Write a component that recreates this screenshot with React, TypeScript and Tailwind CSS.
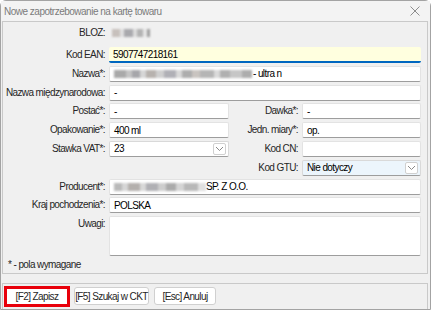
import React from "react";

const font = "font-['Liberation_Sans',Arial,sans-serif]";

// blurred placeholder for hidden values
function Blur({ blocks }: { blocks: [number, string][] }) {
  return (
    <span className="flex h-[9px] items-center blur-[0.8px]">
      {blocks.map(([w, c], i) => (
        <span key={i} className="h-[8px]" style={{ width: w, background: c }} />
      ))}
    </span>
  );
}

function Chevron() {
  return (
    <svg width="9" height="6" viewBox="0 0 9 6" fill="none">
      <path d="M1 1 L4.5 4.5 L8 1" stroke="#8a8a8a" strokeWidth="1" />
    </svg>
  );
}

function Label({ text, w = "w-[102px]" }: { text: string; w?: string }) {
  return (
    <div className={`${w} shrink-0 whitespace-nowrap text-right leading-[16px] text-[#262626]`}>{text}</div>
  );
}

function Input({ children, className = "" }: { children?: React.ReactNode; className?: string }) {
  return (
    <div
      className={`flex h-[16px] items-center whitespace-nowrap rounded-[2px] border border-[#e3e3e3] border-b-[#9d9d9d] bg-white pl-[4px] text-black ${className}`}
    >
      {children}
    </div>
  );
}

function Select({ value, className = "" }: { value: string; className?: string }) {
  return (
    <div
      className={`flex h-[16px] items-center rounded-[2px] border border-[#d9d9d9] border-b-[#9d9d9d] pl-[4px] pr-[2px] text-black ${className}`}
    >
      <span className="flex-1">{value}</span>
      <span className="flex h-[12px] w-[13px] items-center justify-center rounded-[2px] border border-[#d0d0d0] bg-white">
        <Chevron />
      </span>
    </div>
  );
}

export default function App() {
  return (
    <div className={`${font} h-[310px] w-[431px] overflow-hidden bg-white text-[10px] tracking-[-0.6px]`}>
      <div className="flex h-[310px] w-[431px] flex-col rounded-t-[6px] border border-[#a3a3a3] bg-[#f0f0f0]">
        {/* Title bar */}
        <div className="flex h-[20px] shrink-0 items-center justify-between bg-[#f3f3f3] pl-[3px] pr-[10px]">
          <span className="whitespace-nowrap text-[10px] tracking-[-0.5px] text-[#7b7b7b]">
            Nowe zapotrzebowanie na kartę towaru
          </span>
          <svg width="10" height="10" viewBox="0 0 10 10">
            <path d="M0.5 0.5 L9.5 9.5 M9.5 0.5 L0.5 9.5" stroke="#8c8c8c" strokeWidth="1" />
          </svg>
        </div>

        {/* Form panel */}
        <div className="ml-[1px] mr-[2px] flex h-[253px] shrink-0 flex-col border border-[#c9c9c9] pr-[6px] pt-[3px]">
          <div className="flex h-[16px] items-center gap-[4px]">
            <Label text="BLOZ:" />
            <div className="pl-[3px]">
              <Blur blocks={[[8, "#c7c0bc"], [4, "#e0e0e0"], [9, "#a9a9ad"], [4, "#dcdcdc"], [6, "#b3b3b3"], [4, "#e6e6e6"], [3, "#9e9e9e"]]} />
            </div>
          </div>

          <div className="mt-[6px] flex flex-col gap-[2.8px]">
            <div className="flex items-center gap-[4px]">
              <Label text="Kod EAN:" />
              <div className="flex h-[16px] flex-1 items-center rounded-[2px] border-b-[2px] border-[#0067c0] bg-[#ffffdf] pl-[4px] text-black">
                5907747218161
              </div>
            </div>

            <div className="flex items-center gap-[4px]">
              <Label text="Nazwa*:" />
              <Input className="flex-1">
                <Blur
                  blocks={[
                    [12, "#a9a9a9"], [6, "#c4c4c4"], [8, "#a6a6aa"], [6, "#d6d6d6"], [10, "#b7b2ae"],
                    [8, "#cfcfcf"], [12, "#b0b0b6"], [6, "#d9d9d9"], [10, "#adadad"], [8, "#c9c4c0"],
                    [14, "#b5b5b5"], [6, "#dadada"], [10, "#b0b0b0"], [12, "#c6c6c6"], [10, "#adadad"],
                  ]}
                />
                <span className="ml-[1px]">- ultra n</span>
              </Input>
            </div>

            <div className="flex items-center gap-[4px]">
              <Label text="Nazwa międzynarodowa:" />
              <Input className="flex-1">-</Input>
            </div>

            <div className="flex items-center gap-[4px]">
              <Label text="Postać*:" />
              <Input className="w-[120px]">-</Input>
              <Label text="Dawka*:" w="w-[65px]" />
              <Input className="flex-1">-</Input>
            </div>

            <div className="flex items-center gap-[4px]">
              <Label text="Opakowanie*:" />
              <Input className="w-[120px]">400 ml</Input>
              <Label text="Jedn. miary*:" w="w-[65px]" />
              <Input className="flex-1">op.</Input>
            </div>

            <div className="flex items-center gap-[4px]">
              <Label text="Stawka VAT*:" />
              <Select value="23" className="w-[120px] bg-white" />
              <Label text="Kod CN:" w="w-[65px]" />
              <Input className="flex-1" />
            </div>

            <div className="flex items-center gap-[4px]">
              <div className="w-[226px] shrink-0" />
              <Label text="Kod GTU:" w="w-[65px]" />
              <Select value="Nie dotyczy" className="flex-1 bg-[#ecf5fc]" />
            </div>

            <div className="flex items-center gap-[4px]">
              <Label text="Producent*:" />
              <Input className="flex-1">
                <Blur
                  blocks={[
                    [8, "#b9b9b9"], [6, "#d6d6d6"], [12, "#b4b0ad"], [6, "#d8d8d8"], [12, "#b0b0b4"],
                    [8, "#cdcdcd"], [10, "#aaaaaa"], [8, "#d4d4d4"], [14, "#b8b8b8"], [8, "#e0e0e0"],
                  ]}
                />
                <span>SP. Z O.O.</span>
              </Input>
            </div>

            <div className="flex items-center gap-[4px]">
              <Label text="Kraj pochodzenia*:" />
              <Input className="flex-1">POLSKA</Input>
            </div>

            <div className="flex items-start gap-[4px]">
              <Label text="Uwagi:" />
              <div className="h-[40px] flex-1 rounded-[2px] border border-[#e3e3e3] border-b-[#9d9d9d] bg-white" />
            </div>
          </div>

          <div className="mt-[1px] whitespace-nowrap pl-[5px] leading-[16px] text-[#262626]">* - pola wymagane</div>
        </div>

        {/* Button bar */}
        <div className="ml-[1px] mr-[2px] mt-[9px] flex flex-1 items-start gap-[4px] border border-b-0 border-[#c9c9c9] pl-[1px] pt-[2px]">
          <div className="border-[3px] border-[#e8000b]">
            <button className="h-[15px] w-[60px] whitespace-nowrap bg-white text-[10px] leading-[15px] tracking-[-0.6px] text-[#262626]">
              [F2] Zapisz
            </button>
          </div>
          <button className="mt-[1px] h-[18px] w-[75px] whitespace-nowrap rounded-[3px] border border-[#d0d0d0] bg-white text-[10px] tracking-[-0.6px] text-[#262626]">
            [F5] Szukaj w CKT
          </button>
          <button className="ml-[1px] mt-[1px] h-[18px] w-[62px] whitespace-nowrap rounded-[3px] border border-[#d0d0d0] bg-white text-[10px] tracking-[-0.6px] text-[#262626]">
            [Esc] Anuluj
          </button>
        </div>
      </div>
    </div>
  );
}
